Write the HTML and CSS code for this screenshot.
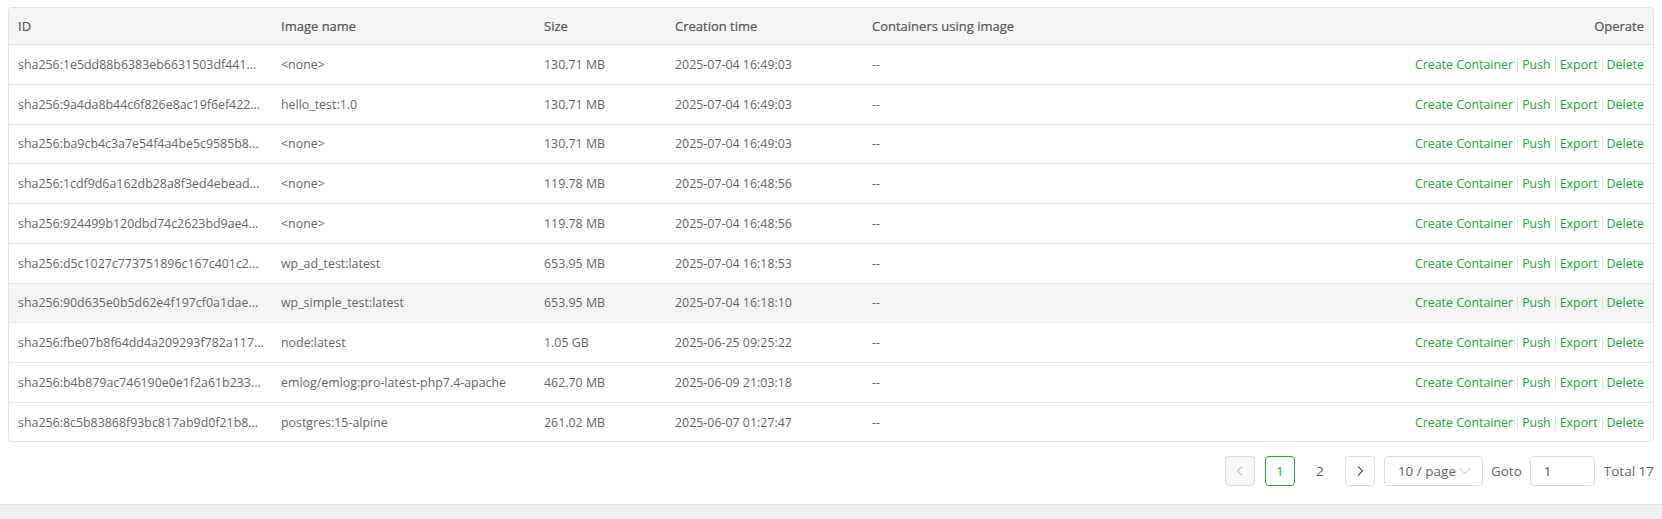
FILE: index.html
```html
<!DOCTYPE html>
<html>
<head>
<meta charset="utf-8">
<link rel="stylesheet" href="styles.css">
</head>
<body>
<div class="page">
  <div class="panel">
    <table class="grid">
      <colgroup>
        <col class="c-id"><col class="c-name"><col class="c-size"><col class="c-time"><col class="c-use"><col class="c-op">
      </colgroup>
      <thead>
        <tr><th>ID</th><th>Image name</th><th>Size</th><th>Creation time</th><th>Containers using image</th><th class="op">Operate</th></tr>
      </thead>
      <tbody>
        <tr><td>sha256:1e5dd88b6383eb6631503df441...</td><td>&lt;none&gt;</td><td>130.71 MB</td><td>2025-07-04 16:49:03</td><td>--</td><td class="op"><a>Create Container</a><span class="sep"></span><a>Push</a><span class="sep"></span><a>Export</a><span class="sep"></span><a>Delete</a></td></tr>
        <tr><td>sha256:9a4da8b44c6f826e8ac19f6ef422...</td><td>hello_test:1.0</td><td>130.71 MB</td><td>2025-07-04 16:49:03</td><td>--</td><td class="op"><a>Create Container</a><span class="sep"></span><a>Push</a><span class="sep"></span><a>Export</a><span class="sep"></span><a>Delete</a></td></tr>
        <tr><td>sha256:ba9cb4c3a7e54f4a4be5c9585b8...</td><td>&lt;none&gt;</td><td>130.71 MB</td><td>2025-07-04 16:49:03</td><td>--</td><td class="op"><a>Create Container</a><span class="sep"></span><a>Push</a><span class="sep"></span><a>Export</a><span class="sep"></span><a>Delete</a></td></tr>
        <tr><td>sha256:1cdf9d6a162db28a8f3ed4ebead...</td><td>&lt;none&gt;</td><td>119.78 MB</td><td>2025-07-04 16:48:56</td><td>--</td><td class="op"><a>Create Container</a><span class="sep"></span><a>Push</a><span class="sep"></span><a>Export</a><span class="sep"></span><a>Delete</a></td></tr>
        <tr><td>sha256:924499b120dbd74c2623bd9ae4...</td><td>&lt;none&gt;</td><td>119.78 MB</td><td>2025-07-04 16:48:56</td><td>--</td><td class="op"><a>Create Container</a><span class="sep"></span><a>Push</a><span class="sep"></span><a>Export</a><span class="sep"></span><a>Delete</a></td></tr>
        <tr><td>sha256:d5c1027c773751896c167c401c2...</td><td>wp_ad_test:latest</td><td>653.95 MB</td><td>2025-07-04 16:18:53</td><td>--</td><td class="op"><a>Create Container</a><span class="sep"></span><a>Push</a><span class="sep"></span><a>Export</a><span class="sep"></span><a>Delete</a></td></tr>
        <tr class="hover"><td>sha256:90d635e0b5d62e4f197cf0a1dae...</td><td>wp_simple_test:latest</td><td>653.95 MB</td><td>2025-07-04 16:18:10</td><td>--</td><td class="op"><a>Create Container</a><span class="sep"></span><a>Push</a><span class="sep"></span><a>Export</a><span class="sep"></span><a>Delete</a></td></tr>
        <tr><td>sha256:fbe07b8f64dd4a209293f782a117...</td><td>node:latest</td><td>1.05 GB</td><td>2025-06-25 09:25:22</td><td>--</td><td class="op"><a>Create Container</a><span class="sep"></span><a>Push</a><span class="sep"></span><a>Export</a><span class="sep"></span><a>Delete</a></td></tr>
        <tr><td>sha256:b4b879ac746190e0e1f2a61b233...</td><td>emlog/emlog:pro-latest-php7.4-apache</td><td>462.70 MB</td><td>2025-06-09 21:03:18</td><td>--</td><td class="op"><a>Create Container</a><span class="sep"></span><a>Push</a><span class="sep"></span><a>Export</a><span class="sep"></span><a>Delete</a></td></tr>
        <tr><td>sha256:8c5b83868f93bc817ab9d0f21b8...</td><td>postgres:15-alpine</td><td>261.02 MB</td><td>2025-06-07 01:27:47</td><td>--</td><td class="op"><a>Create Container</a><span class="sep"></span><a>Push</a><span class="sep"></span><a>Export</a><span class="sep"></span><a>Delete</a></td></tr>
      </tbody>
    </table>
    <div class="pager">
      <button class="pbtn disabled" aria-label="previous"><svg width="12" height="12" viewBox="0 0 12 12"><polyline points="8,1.5 3.5,6 8,10.5" fill="none" stroke="currentColor" stroke-width="1.2"/></svg></button>
      <span class="pnum active">1</span>
      <span class="pnum">2</span>
      <button class="pbtn" aria-label="next"><svg width="12" height="12" viewBox="0 0 12 12"><polyline points="4,1.5 8.5,6 4,10.5" fill="none" stroke="currentColor" stroke-width="1.3"/></svg></button>
      <div class="sizes"><span>10 / page</span><svg width="14" height="10" viewBox="0 0 14 10"><polyline points="1.5,2.5 7,7.5 12.5,2.5" fill="none" stroke="currentColor" stroke-width="1"/></svg></div>
      <span class="label">Goto</span>
      <div class="goto">1</div>
      <span class="label total">Total 17</span>
    </div>
  </div>
  <div class="footer"></div>
</div>
</body>
</html>
```

FILE: styles.css
```css
* { box-sizing: border-box; }
html, body { margin: 0; padding: 0; }
body {
  font-family: "Open Sans", "Noto Sans", sans-serif;
  font-size: 12.4px;
  color: #666;
  background: #fff;
  width: 1662px;
  height: 519px;
  overflow: hidden;
}
.page { display: flex; flex-direction: column; height: 519px; }
.panel { padding: 7px 8px 0; height: 504px; background: #fff; }
.footer { flex: 1; background: #f0f0f0; border-top: 1px solid #e6e6e6; }

.grid {
  width: 100%;
  table-layout: fixed;
  border-collapse: separate;
  border-spacing: 0;
  border: 1px solid #e3e3e3;
  border-radius: 4px;
  overflow: hidden;
}
.c-id { width: 263px; }
.c-name { width: 263px; }
.c-size { width: 131px; }
.c-time { width: 197px; }
.c-use { width: 400px; }

.grid th {
  height: 37px;
  background: #f5f5f5;
  color: #555;
  font-size: 13px;
  font-weight: 500;
  text-align: left;
  padding: 0 9px;
  border-bottom: 1px solid #e3e3e3;
  white-space: nowrap;
  -webkit-text-stroke: 0.2px #555;
}
.grid td {
  height: 39.75px;
  padding: 0 9px;
  border-bottom: 1px solid #e8e8e8;
  white-space: nowrap;
  overflow: hidden;
  color: #666;
}
.grid tbody tr:last-child td { border-bottom: 0; height: 38.5px; }
.grid tr.hover td { background: #f5f5f5; }
.grid .op { text-align: right; }
.grid .op a { color: #20a53a; cursor: pointer; }
.sep {
  display: inline-block;
  width: 1px;
  height: 15px;
  background: #e0e0e0;
  margin: 0 4px;
  vertical-align: -3px;
}

.pager {
  display: flex;
  align-items: center;
  justify-content: flex-end;
  margin-top: 14px;
  font-size: 13.5px;
  color: #666;
}
.pbtn, .pnum {
  width: 30px;
  height: 30px;
  display: flex;
  align-items: center;
  justify-content: center;
  border-radius: 4px;
  margin-right: 10px;
  font-family: inherit;
  font-size: 13.5px;
  color: #555;
  padding: 0;
}
.pbtn { border: 1px solid #dcdcdc; background: #fff; color: #666; }
.pbtn.disabled { background: #f7f7f8; color: #c8c8c8; }
.pnum { border: 1px solid transparent; }
.pnum.active { border-color: #20a53a; color: #20a53a; }
.pnum + .pbtn { margin-right: 9px; }
.sizes {
  width: 99px;
  height: 30px;
  border: 1px solid #dcdcdc;
  border-radius: 4px;
  display: flex;
  align-items: center;
  justify-content: space-between;
  padding: 0 10px 0 13px;
  color: #666;
  margin-right: 8px;
}
.sizes svg { color: #c0c0c0; }
.label { color: #666; }
.goto {
  width: 65px;
  height: 30px;
  border: 1px solid #dcdcdc;
  border-radius: 4px;
  display: flex;
  align-items: center;
  padding: 0 13px;
  margin: 0 9px 0 8px;
  color: #555;
}
```
